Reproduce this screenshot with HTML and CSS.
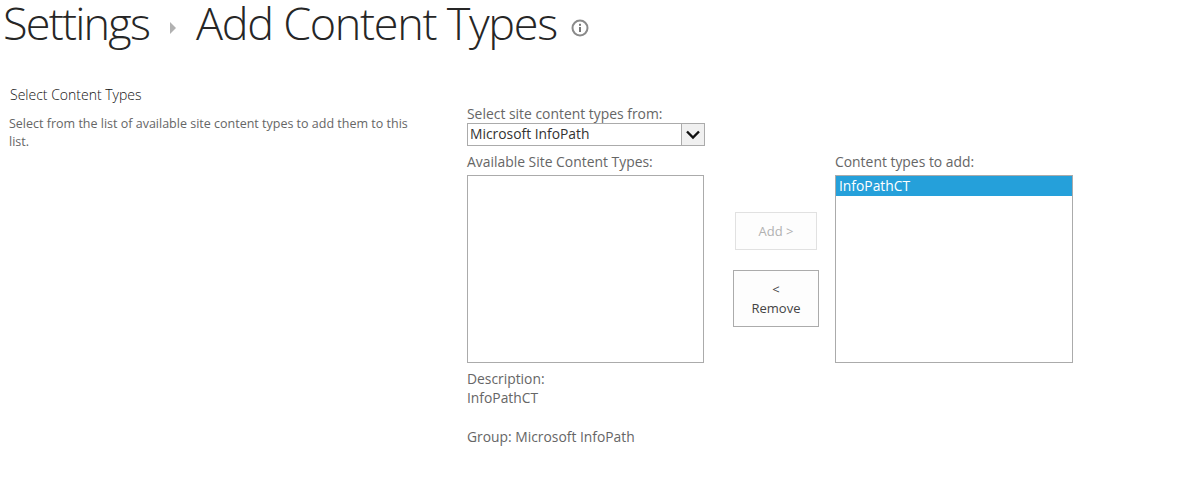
FILE: index.html
```html
<!DOCTYPE html>
<html lang="en">
<head>
<meta charset="utf-8">
<title>Add Content Types</title>
<link rel="stylesheet" href="styles.css">
</head>
<body>
<header class="title">
  <span class="crumb crumb-root">Settings</span>
  <svg class="sep" width="8" height="14" viewBox="0 0 8 14"><path d="M1 1l6 6-6 6z" fill="#b1b1b1"/></svg>
  <span class="crumb">Add Content Types</span>
  <svg class="info" width="18" height="18" viewBox="0 0 18 18"><circle cx="9" cy="9" r="7.5" fill="none" stroke="#8a8a8a" stroke-width="2"/><rect x="8" y="8" width="2" height="5" fill="#777"/><rect x="8" y="4.8" width="2" height="2" fill="#777"/></svg>
</header>
<main class="section">
  <div class="intro">
    <h2 class="intro-title">Select Content Types</h2>
    <p class="intro-text">Select from the list of available site content types to add them to this list.</p>
  </div>
  <div class="picker">
    <div class="source">
      <div class="label">Select site content types from:</div>
      <div class="select">
        <span class="select-value">Microsoft InfoPath</span>
        <span class="select-arrow"><svg width="16" height="10" viewBox="0 0 16 10"><path d="M2 1.5l6 6 6-6" fill="none" stroke="#111" stroke-width="2.4"/></svg></span>
      </div>
    </div>
    <div class="columns">
      <div class="col-left">
        <div class="label">Available Site Content Types:</div>
        <div class="listbox listbox-left"></div>
      </div>
      <div class="actions">
        <button class="btn btn-add" disabled>Add &gt;</button>
        <button class="btn btn-remove">&lt;<br>Remove</button>
      </div>
      <div class="col-right">
        <div class="label">Content types to add:</div>
        <div class="listbox listbox-right"><div class="option">InfoPathCT</div></div>
      </div>
    </div>
    <div class="details">
      <div>Description:</div>
      <div>InfoPathCT</div>
      <div class="group">Group: Microsoft InfoPath</div>
    </div>
  </div>
</main>
</body>
</html>
```
FILE: styles.css
```css
* { box-sizing: border-box; }
html, body { margin: 0; padding: 0; }
body {
  width: 1189px;
  height: 477px;
  overflow: hidden;
  background: #fff;
  font-family: "Open Sans", "Liberation Sans", sans-serif;
  color: #666;
  font-size: 14px;
}
.title {
  display: flex;
  align-items: center;
  height: 46px;
  padding-left: 3px;
  color: #262626;
  font-size: 45px;
  font-weight: 300;
  letter-spacing: -1.3px;
  line-height: 46px;
  white-space: nowrap;
}
.crumb-root { letter-spacing: -1.8px; }
.sep { margin: 10px 19px 0 20px; }
.info { margin: 10px 0 0 14px; }
.section { display: flex; padding-top: 38px; }
.intro { width: 467px; flex: none; padding-left: 9px; }
.intro-title {
  margin: 1px 0 0 1px;
  font-size: 14px;
  font-weight: 300;
  line-height: 20px;
  color: #111;
}
.intro-text {
  width: 410px;
  margin: 10px 0 0;
  font-size: 12.5px;
  line-height: 18px;
  color: #666;
}
.picker { padding-top: 20px; }
.label { font-size: 13.9px; line-height: 19px; color: #666; white-space: nowrap; }
.select {
  display: flex;
  width: 238px;
  height: 23px;
  border: 1px solid #ababab;
}
.select-value { flex: 1; padding-left: 2px; font-size: 13.85px; line-height: 20px; color: #333; }
.select-arrow {
  width: 23px;
  display: flex;
  align-items: center;
  justify-content: center;
  background: #f0f0f0;
  border-left: 1px solid #ababab;
}
.columns { display: flex; margin-top: 6px; }
.col-left { width: 237px; }
.col-right { width: 238px; }
.listbox { height: 188px; border: 1px solid #ababab; background: #fff; margin-top: 4px; }
.option { height: 20px; padding-left: 3px; background: #25a0da; color: #fff; font-size: 13.85px; line-height: 20px; }
.actions {
  width: 131px;
  display: flex;
  flex-direction: column;
  align-items: center;
  padding: 60px 0 0 13px;
}
.btn {
  font-family: inherit;
  font-size: 13px;
  line-height: 19px;
  background: #fdfdfd;
  padding: 0;
  display: block;
}
.btn-add { width: 82px; height: 38px; color: #b1b1b1; border: 1px solid #e1e1e1; padding-top: 1px; }
.btn-remove { width: 86px; height: 57px; margin-top: 20px; color: #444; border: 1px solid #ababab; }
.details { margin-top: 6px; font-size: 13.85px; line-height: 19px; color: #666; }
.group { margin-top: 20px; }
```
